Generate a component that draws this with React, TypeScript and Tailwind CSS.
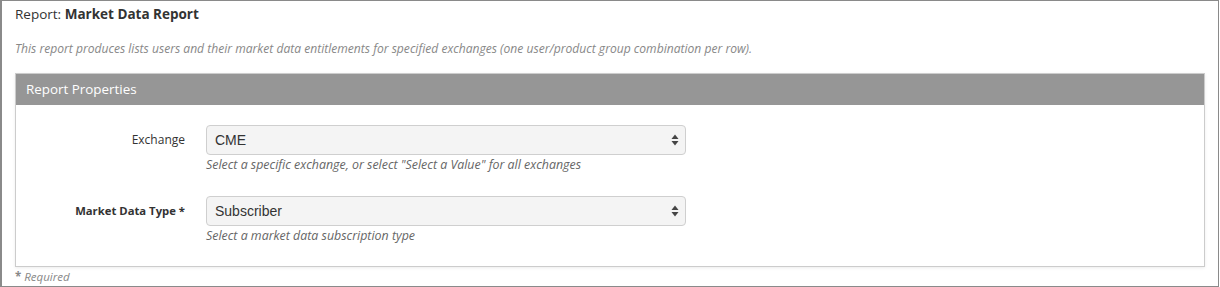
import { ReactNode } from "react";

const font = { fontFamily: "'Open Sans', 'Noto Sans', sans-serif" };

function Arrows() {
  return (
    <svg width="8" height="12" viewBox="0 0 8 12" className="absolute right-[6px] top-[8px]">
      <path d="M4 0.5 L7.5 5 L0.5 5 Z" fill="#444" />
      <path d="M4 11.5 L7.5 7 L0.5 7 Z" fill="#444" />
    </svg>
  );
}

function FieldRow({ label, value, hint, required }: { label: string; value: string; hint: string; required?: boolean }) {
  return (
    <div className="flex items-start">
      <div
        className={
          "w-[169px] shrink-0 text-right leading-[30px] text-[#333] " +
          (required ? "font-bold text-[11.3px]" : "text-[12px]")
        }
      >
        {label}
        {required && " *"}
      </div>
      <div className="ml-[21px] w-[480px]">
        <div className="relative h-[30px] rounded-[4px] border border-[#cfcfcf] bg-[#f4f4f4]">
          <span
            className="absolute left-[8px] top-0 text-[14px] leading-[28px] text-[#333]"
            style={{ fontFamily: "'Liberation Sans', Arial, sans-serif" }}
          >
            {value}
          </span>
          <Arrows />
        </div>
        <div className="mt-[2px] text-[12.4px] italic leading-[16px] text-[#666]">{hint}</div>
      </div>
    </div>
  );
}

function Panel({ title, children }: { title: string; children: ReactNode }) {
  return (
    <div className="mx-[13px] border border-[#cccccc] bg-white shadow-[0_1px_3px_rgba(0,0,0,0.08)]">
      <div className="h-[31px] bg-[#969696] px-[10px] text-[13.4px] leading-[31px] text-white">{title}</div>
      {children}
    </div>
  );
}

export default function App() {
  return (
    <div className="h-[287px] w-[1220px] bg-white" style={font}>
      <div className="h-[287px] w-[1219px] border border-[#8a8a8a] border-l-2">
        <div className="px-[13px] pt-[3px] text-[13.5px] leading-[20px] text-[#333]">
          Report: <span className="font-bold">Market Data Report</span>
        </div>
        <div className="mt-[18px] px-[13px] text-[12.1px] italic leading-[14px] text-[#888]">
          This report produces lists users and their market data entitlements for specified exchanges (one user/product
          group combination per row).
        </div>
        <div className="mt-[17px]">
          <Panel title="Report Properties">
            <div className="flex flex-col gap-[23px] pb-[22px] pt-[20px]">
              <FieldRow
                label="Exchange"
                value="CME"
                hint={'Select a specific exchange, or select "Select a Value" for all exchanges'}
              />
              <FieldRow
                label="Market Data Type"
                value="Subscriber"
                hint="Select a market data subscription type"
                required
              />
            </div>
          </Panel>
        </div>
        <div className="px-[13px] pt-[3px] text-[11.5px] italic leading-[14px] text-[#888]">
          <span className="font-bold not-italic">*</span> Required
        </div>
      </div>
    </div>
  );
}
